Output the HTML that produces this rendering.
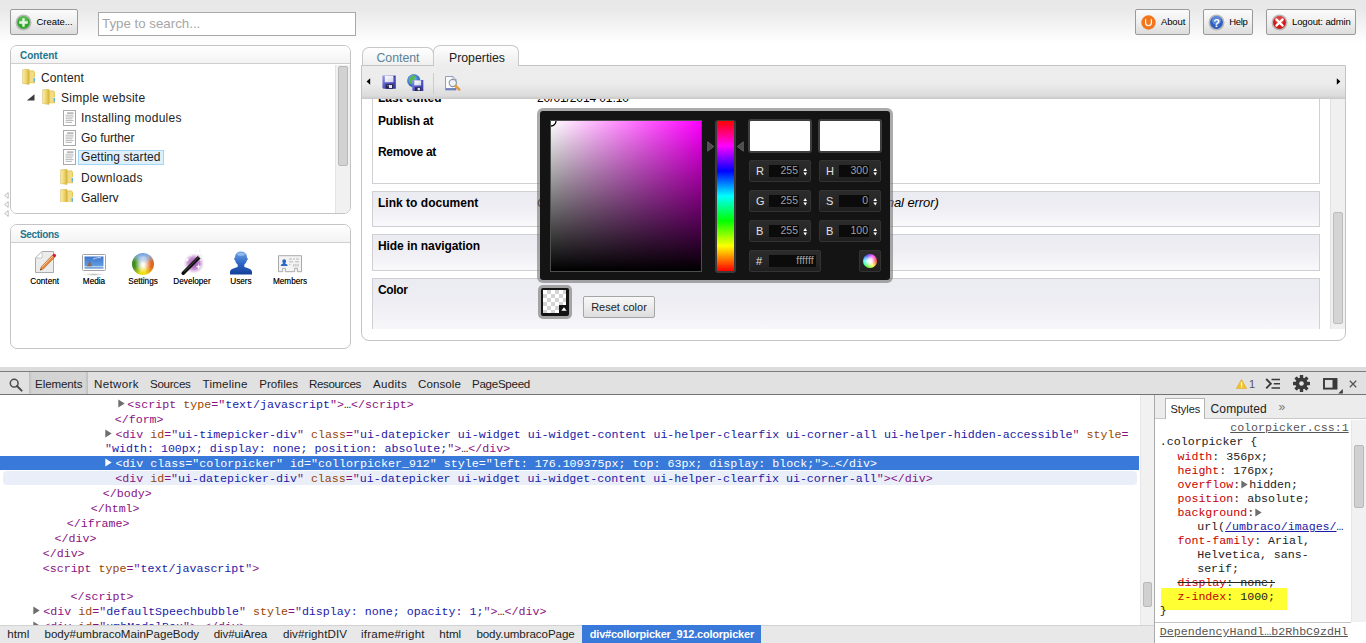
<!DOCTYPE html>
<html>
<head>
<meta charset="utf-8">
<title>Umbraco</title>
<style>
*{box-sizing:border-box;margin:0;padding:0}
html,body{width:1366px;height:643px;overflow:hidden;background:#fff}
body{position:relative;font-family:"Liberation Sans",sans-serif;font-size:12px;color:#222}
.abs{position:absolute}
#topgrad{left:0;top:0;width:1366px;height:43px;background:linear-gradient(#e8e8e8 0,#e9e9e9 22%,#f4f4f4 62%,#fff 100%)}
.btn{position:absolute;height:26px;border:1px solid #9a9a9a;border-radius:2px;background:linear-gradient(#fbfbfb,#efefef 50%,#dcdcdc);font-size:9.5px;color:#000;line-height:24px;white-space:nowrap}
.btn span{position:absolute;top:0}
#search{left:98px;top:12px;width:258px;height:24px;border:1px solid #a8a8a8;background:#fff;font-size:13.3px;color:#a6a6a6;line-height:22px;padding-left:3px}
.panel{position:absolute;border:1px solid #c4c4c4;border-radius:7px;background:#fff;overflow:hidden}
.phead{position:absolute;left:0;top:0;right:0;height:18px;border-bottom:1px solid #cfcfcf;background:linear-gradient(#fff,#f3f3f3);font-size:10px;font-weight:bold;color:#22758f;line-height:19px;padding-left:9px}
.tree{position:absolute;font-size:12px;color:#222;line-height:16px;white-space:nowrap;}
.tab{position:absolute;border:1px solid #c8c8c8;border-bottom:none;border-radius:7px 7px 0 0;font-size:13px;text-align:center}
.seclbl{position:absolute;top:51px;width:60px;text-align:center;font-size:8.2px;color:#000;line-height:11px;text-shadow:0 0 .3px rgba(0,0,0,.5)}
.pane{position:absolute;left:10px;width:948px;border:1px solid #d0d0d4;background:linear-gradient(#ebebf2,#ededf3 40%,#f9f9fb)}
.plabel{position:absolute;left:16px;font-size:12px;font-weight:bold;line-height:16px;color:#000;white-space:nowrap}
.cpf{position:absolute;height:22px;border:1px solid #333;border-radius:2px;background:linear-gradient(#2b2b2b,#272727 50%,#1f1f1f);}
.cpl{position:absolute;left:6px;top:0;line-height:21px;font-size:11px;color:#e2e2e2}
.cpi{position:absolute;top:4px;height:12px;background:#0b0b0b;color:#a0a0a0;font-size:10.500px;line-height:11px;text-align:right;padding-right:1px}
/* devtools */
#dt{left:0;top:368px;width:1366px;height:275px;background:#fff}
.mono{font-family:"Liberation Mono",monospace;font-size:11px;white-space:pre}
.ln{position:absolute;height:15px;line-height:15px;font-family:"Liberation Mono",monospace;font-size:11.65px;white-space:pre;color:#222}
.t{color:#881280}.a{color:#994500}.v{color:#1a1aa6}
.sel,.sel .t,.sel .a,.sel .v{color:#fff}
.dtab{position:absolute;top:8px;font-size:11.6px;color:#222;line-height:16px}
.bc{position:absolute;top:0;height:18px;line-height:18px;font-size:11.6px;color:#222;white-space:nowrap}
.sl{position:absolute;height:14px;line-height:14px;font-family:"Liberation Mono",monospace;font-size:11.62px;white-space:pre;color:#222}
.p{color:#c80000}
</style>
</head>
<body>
<div class="abs" id="topgrad"></div>

<!-- Create button -->
<div class="btn" style="left:10px;top:9px;width:68px">
  <svg class="abs" style="left:3.5px;top:3.5px" width="17" height="17" viewBox="0 0 17 17"><circle cx="8.5" cy="8.5" r="8" fill="#b9b9b9"/><circle cx="8.5" cy="8.5" r="6.3" fill="#2fa52c"/><circle cx="8.5" cy="6.5" r="4.6" fill="#5cc455" opacity=".7"/><path d="M7.3 4.2h2.4v3.1h3.1v2.4H9.7v3.1H7.3V9.7H4.2V7.3h3.1z" fill="#e9f3e6"/></svg>
  <span style="letter-spacing:-0.05px;left:25.5px">Create...</span>
</div>
<div class="abs" id="search">Type to search...</div>

<!-- right buttons -->
<div class="btn" style="left:1135px;top:9px;width:55px">
  <svg class="abs" style="left:5px;top:5px" width="15" height="15" viewBox="0 0 15 15"><circle cx="7.5" cy="7.5" r="7.2" fill="#f1761d"/><path d="M4.6 4.3v3.4a2.9 2.9 0 0 0 5.8 0V4.3" fill="none" stroke="#fff" stroke-width="1.2"/></svg>
  <span style="letter-spacing:-0.13px;left:25px">About</span>
</div>
<div class="btn" style="left:1203px;top:9px;width:50px">
  <svg class="abs" style="left:4px;top:4px" width="17" height="17" viewBox="0 0 17 17"><circle cx="8.5" cy="8.5" r="8" fill="#b9b9b9"/><circle cx="8.5" cy="8.5" r="6.4" fill="#2f5fc0"/><circle cx="8.5" cy="6.3" r="4.6" fill="#6d97e6" opacity=".7"/><text x="8.5" y="12.6" font-family="Liberation Sans" font-weight="bold" font-size="11" fill="#fff" text-anchor="middle">?</text></svg>
  <span style="letter-spacing:-0.34px;left:25.3px">Help</span>
</div>
<div class="btn" style="left:1266px;top:9px;width:90px">
  <svg class="abs" style="left:4px;top:4px" width="17" height="17" viewBox="0 0 17 17"><circle cx="8.5" cy="8.5" r="8" fill="#b9b9b9"/><circle cx="8.5" cy="8.5" r="6.4" fill="#d01818"/><circle cx="8.5" cy="6.3" r="4.6" fill="#ee5a5a" opacity=".6"/><path d="M5.4 5.4l6.2 6.2M11.6 5.4l-6.2 6.2" stroke="#fff" stroke-width="2.2" stroke-linecap="round"/></svg>
  <span style="letter-spacing:-0.12px;left:25px">Logout: admin</span>
</div>

<!-- splitter arrows -->
<svg class="abs" style="left:3.500px;top:192.0px" width="5" height="7" viewBox="0 0 5 7"><path d="M4.200 .6v5.800L.7 3.500z" fill="#fff" stroke="#ababab" stroke-width=".8"/></svg><svg class="abs" style="left:3.500px;top:201.0px" width="5" height="7" viewBox="0 0 5 7"><path d="M4.200 .6v5.800L.7 3.500z" fill="#fff" stroke="#ababab" stroke-width=".8"/></svg><svg class="abs" style="left:3.500px;top:210.0px" width="5" height="7" viewBox="0 0 5 7"><path d="M4.200 .6v5.800L.7 3.500z" fill="#fff" stroke="#ababab" stroke-width=".8"/></svg>
<!-- LEFT: content panel -->
<div class="panel" id="pcontent" style="left:10px;top:45px;width:341px;height:169px">
  <div class="phead"><span style="letter-spacing:-0.03px;">Content</span></div>
<svg class="abs" style="left:11px;top:23px" width="14" height="16" viewBox="0 0 14 16"><defs><linearGradient id="fg1" x1="0" x2="1"><stop offset="0" stop-color="#f9efb4"/><stop offset=".55" stop-color="#ecd46c"/><stop offset="1" stop-color="#d9b53e"/></linearGradient></defs><path d="M7 1.6h5.2v1.2H13v11.4H7z" fill="#e3c558"/><path d="M7.6 2.6h4.6v10.8H7.6z" fill="#f1dc83"/><path d="M.6 .8L7 .3v15.2L.6 14.4z" fill="url(#fg1)"/><path d="M.6 .8L7 .3v15.2L.6 14.4z" fill="none" stroke="#d2b04a" stroke-width=".5"/><rect x="11.6" y="8.6" width="1.3" height="4.2" fill="#59b1e6"/><rect x="11.6" y="8" width="1.3" height="1" fill="#e9f5fb"/></svg>
<div class="tree" style="letter-spacing:0.14px;left:30px;top:24px">Content</div>
<svg class="abs" style="left:15px;top:48px" width="9" height="7" viewBox="0 0 9 7"><path d="M8.500 .3v6.200H.8z" fill="#3c3c3c"/></svg>
<svg class="abs" style="left:31px;top:43px" width="14" height="16" viewBox="0 0 14 16"><defs><linearGradient id="fg2" x1="0" x2="1"><stop offset="0" stop-color="#f9efb4"/><stop offset=".55" stop-color="#ecd46c"/><stop offset="1" stop-color="#d9b53e"/></linearGradient></defs><path d="M7 1.6h5.2v1.2H13v11.4H7z" fill="#e3c558"/><path d="M7.6 2.6h4.6v10.8H7.6z" fill="#f1dc83"/><path d="M.6 .8L7 .3v15.2L.6 14.4z" fill="url(#fg2)"/><path d="M.6 .8L7 .3v15.2L.6 14.4z" fill="none" stroke="#d2b04a" stroke-width=".5"/><rect x="11.6" y="8.6" width="1.3" height="4.2" fill="#59b1e6"/><rect x="11.6" y="8" width="1.3" height="1" fill="#e9f5fb"/></svg>
<div class="tree" style="letter-spacing:0.26px;left:50px;top:44px">Simple website</div>
<svg class="abs" style="left:52px;top:64px" width="13" height="16" viewBox="0 0 13 16"><rect x=".5" y=".5" width="12" height="15" fill="#fff" stroke="#a9a9a9"/><g fill="#b9b9b9"><rect x="4" y="2.5" width="6.5" height="1.2" fill="#9a9a9a"/><rect x="2.5" y="4.7" width="8" height="1"/><rect x="2.5" y="6.5" width="8" height="1"/><rect x="2.5" y="8.3" width="7" height="1"/><rect x="2.5" y="10.1" width="8" height="1"/><rect x="2.5" y="11.9" width="6.5" height="1"/></g></svg>
<div class="tree" style="letter-spacing:0.26px;left:70px;top:64px">Installing modules</div>
<svg class="abs" style="left:52px;top:84px" width="13" height="16" viewBox="0 0 13 16"><rect x=".5" y=".5" width="12" height="15" fill="#fff" stroke="#a9a9a9"/><g fill="#b9b9b9"><rect x="4" y="2.5" width="6.5" height="1.2" fill="#9a9a9a"/><rect x="2.5" y="4.7" width="8" height="1"/><rect x="2.5" y="6.5" width="8" height="1"/><rect x="2.5" y="8.3" width="7" height="1"/><rect x="2.5" y="10.1" width="8" height="1"/><rect x="2.5" y="11.9" width="6.5" height="1"/></g></svg>
<div class="tree" style="letter-spacing:-0.07px;left:70px;top:84px">Go further</div>
<svg class="abs" style="left:52px;top:103px" width="13" height="16" viewBox="0 0 13 16"><rect x=".5" y=".5" width="12" height="15" fill="#fff" stroke="#a9a9a9"/><g fill="#b9b9b9"><rect x="4" y="2.5" width="6.5" height="1.2" fill="#9a9a9a"/><rect x="2.5" y="4.7" width="8" height="1"/><rect x="2.5" y="6.5" width="8" height="1"/><rect x="2.5" y="8.3" width="7" height="1"/><rect x="2.5" y="10.1" width="8" height="1"/><rect x="2.5" y="11.9" width="6.5" height="1"/></g></svg>
<div class="abs" style="left:67px;top:104px;width:86px;height:15px;background:#dff0fb;border:1px solid #a4d5f4"></div>
<div class="tree" style="letter-spacing:0.05px;left:70px;top:103px">Getting started</div>
<svg class="abs" style="left:49px;top:123px" width="14" height="16" viewBox="0 0 14 16"><defs><linearGradient id="fg3" x1="0" x2="1"><stop offset="0" stop-color="#f9efb4"/><stop offset=".55" stop-color="#ecd46c"/><stop offset="1" stop-color="#d9b53e"/></linearGradient></defs><path d="M7 1.6h5.2v1.2H13v11.4H7z" fill="#e3c558"/><path d="M7.6 2.6h4.6v10.8H7.6z" fill="#f1dc83"/><path d="M.6 .8L7 .3v15.2L.6 14.4z" fill="url(#fg3)"/><path d="M.6 .8L7 .3v15.2L.6 14.4z" fill="none" stroke="#d2b04a" stroke-width=".5"/><rect x="11.6" y="8.6" width="1.3" height="4.2" fill="#59b1e6"/><rect x="11.6" y="8" width="1.3" height="1" fill="#e9f5fb"/></svg>
<div class="tree" style="letter-spacing:0.27px;left:70px;top:124px">Downloads</div>
<svg class="abs" style="left:49px;top:143px" width="14" height="16" viewBox="0 0 14 16"><defs><linearGradient id="fg4" x1="0" x2="1"><stop offset="0" stop-color="#f9efb4"/><stop offset=".55" stop-color="#ecd46c"/><stop offset="1" stop-color="#d9b53e"/></linearGradient></defs><path d="M7 1.6h5.2v1.2H13v11.4H7z" fill="#e3c558"/><path d="M7.6 2.6h4.6v10.8H7.6z" fill="#f1dc83"/><path d="M.6 .8L7 .3v15.2L.6 14.4z" fill="url(#fg4)"/><path d="M.6 .8L7 .3v15.2L.6 14.4z" fill="none" stroke="#d2b04a" stroke-width=".5"/><rect x="11.6" y="8.6" width="1.3" height="4.2" fill="#59b1e6"/><rect x="11.6" y="8" width="1.3" height="1" fill="#e9f5fb"/></svg>
<div class="tree" style="letter-spacing:-0.07px;left:70px;top:144px;height:12px;overflow:hidden">Gallery</div>
<div class="abs" style="left:324px;top:19px;width:16px;height:149px;background:#f1f1f1;border-left:1px solid #e4e4e4"></div>
<div class="abs" style="left:327px;top:20px;width:10px;height:100px;background:#d2d2d2;border:1px solid #b8b8b8;border-radius:2px"></div>
<div class="abs" style="left:0;top:156px;width:324px;height:14px;background:#fff"></div>
</div>
<!-- LEFT: sections panel -->
<div class="panel" id="psections" style="left:10px;top:224px;width:341px;height:125px">
  <div class="phead"><span style="letter-spacing:-0.34px;">Sections</span></div>
<div class="seclbl" style="left:3.7px">Content</div>
<div class="seclbl" style="left:53.0px">Media</div>
<div class="seclbl" style="left:102.0px">Settings</div>
<div class="seclbl" style="left:151.0px">Developer</div>
<div class="seclbl" style="left:200.0px">Users</div>
<div class="seclbl" style="left:249.0px">Members</div>
<svg class="abs" style="left:24px;top:26px" width="22" height="23" viewBox="0 0 22 23"><path d="M7 .5h11.5v21H.5V7z" fill="#ececec" stroke="#aaa"/><path d="M7 .5V7H.5z" fill="#fff" stroke="#bbb" stroke-width=".8"/><path d="M17.2 4.3l2.3 2.2L8.3 18 5.2 19.3l1-3.3z" fill="#e08a3c" stroke="#b9672a" stroke-width=".6"/><path d="M17.2 4.3l1.2-1.2c.5-.5 1.200-.5 1.700 0l.7.7c.5.5.5 1.200 0 1.700l-1.300 1.000z" fill="#d02038"/><path d="M5.200 19.300l.5-1.600 1.200 1.100z" fill="#333"/><path d="M7.3 15.800L17.800 5" stroke="#f6c79a" stroke-width=".9"/></svg>
<svg class="abs" style="left:70px;top:28px" width="26" height="24" viewBox="0 0 26 24"><defs><linearGradient id="mg" x1="0" x2="0" y1="0" y2="1"><stop offset="0" stop-color="#3e74cc"/><stop offset=".75" stop-color="#5e9be0"/><stop offset=".8" stop-color="#cfe6f2"/><stop offset="1" stop-color="#3b78c8"/></linearGradient><radialGradient id="ms"><stop offset="0" stop-color="#999" stop-opacity=".6"/><stop offset="1" stop-color="#999" stop-opacity="0"/></radialGradient></defs><ellipse cx="13" cy="21.500" rx="11" ry="1.500" fill="url(#ms)"/><rect x="1.500" y="1.500" width="23" height="16" rx="1" fill="#fff" stroke="#a3a3a3"/><rect x="3.500" y="3.500" width="19" height="12" fill="url(#mg)"/><path d="M6 13.200l2.600-5.500 2.600 5.500z" fill="#8a6a58"/><path d="M12 6.200c3-1.500 5.500-1.700 8-1.500" stroke="#c9dcf2" stroke-width=".9" fill="none"/></svg>
<div class="abs" style="left:123px;top:52px;width:18px;height:4px;border-radius:50%;background:radial-gradient(ellipse,rgba(120,120,120,.55),rgba(120,120,120,0) 70%)"></div><div class="abs" style="left:121px;top:28px;width:22px;height:22px;border-radius:50%;background:radial-gradient(ellipse 60% 28% at 50% 20%,rgba(255,255,255,.6),rgba(255,255,255,0) 100%),radial-gradient(circle at 50% 52%,#fff 0,rgba(255,255,255,.9) 12%,rgba(255,255,255,0) 52%),conic-gradient(from 0deg,#3f7fd0 0deg,#4a82cc 25deg,#e0661c 80deg,#e2681c 110deg,#f0e018 165deg,#ecdf1a 195deg,#3f8e22 250deg,#3f8e22 290deg,#3f7fd0 335deg,#3f7fd0 360deg)"></div>
<svg class="abs" style="left:169px;top:25px" width="26" height="26" viewBox="0 0 26 26"><defs><radialGradient id="dg"><stop offset="0" stop-color="#a04cb0"/><stop offset=".55" stop-color="#b978c6" stop-opacity=".85"/><stop offset="1" stop-color="#d9b8e0" stop-opacity="0"/></radialGradient></defs><circle cx="14" cy="13.400" r="10.500" fill="url(#dg)"/><g fill="#fff"><path d="M7 7.500l.6 1.700 1.700.6-1.700.6L7 12.100l-.6-1.700-1.700-.6 1.700-.6z"/><path d="M18.500 14l.7 2 2 .7-2 .7-.7 2-.7-2-2-.7 2-.7z"/><circle cx="11" cy="5.500" r=".7"/><circle cx="20.500" cy="10" r=".6"/></g><path d="M3.200 23.200L19.600 6.800" stroke="#111" stroke-width="3.600" stroke-linecap="round"/><path d="M19.200 7.200l2.700-2.700" stroke="#f4f4f4" stroke-width="3.600" stroke-linecap="butt"/><path d="M4 21.700L19 6.700" stroke="#555" stroke-width=".8"/><path d="M15 1h1.500M19 .8h1.500" stroke="#bfe0f5" stroke-width=".8"/></svg>
<svg class="abs" style="left:218px;top:26px" width="24" height="24" viewBox="0 0 24 24"><defs><linearGradient id="ug" x1="0" x2="0" y1="0" y2="1"><stop offset="0" stop-color="#6ea3e6"/><stop offset=".5" stop-color="#2f68c6"/><stop offset="1" stop-color="#123f9a"/></linearGradient></defs><path d="M12 .6c3.600 0 6 2.400 6 5.800 0 .5 1 .7.900 1.600-.1 1-.9 1-1.100 1.700-.5 1.800-1.500 3-2.500 3.900v2.200c1.200 1.300 7.700 1.600 7.700 5.200v2.400H1v-2.400c0-3.600 6.500-3.900 7.700-5.200v-2.200c-1-.9-2-2.100-2.500-3.900-.2-.7-1-.7-1.100-1.700C5 7.100 6 6.900 6 6.400 6 3 8.400.6 12 .6z" fill="url(#ug)"/><ellipse cx="12" cy="3.300" rx="3.800" ry="1.500" fill="#a9c9f3" opacity=".7"/></svg>
<svg class="abs" style="left:266px;top:30px" width="26" height="18" viewBox="0 0 26 18"><path d="M1.500 .7h23v16H20.300v-3.400h-2.600v3.400H8.300v-3.400H5.700v3.400H1.500z" fill="#f3f3f3" stroke="#a9a9a9"/><path d="M7.200 4.300c1.200 0 1.900.9 1.900 2 0 .9-.5 1.500-.9 1.900.2.700 2.400.8 2.400 2.300v.6H3.800v-.6c0-1.500 2.200-1.600 2.400-2.300-.4-.4-.9-1-.9-1.900 0-1.100.7-2 1.900-2z" fill="#2d66c4"/><g fill="#c4c4c4"><rect x="12" y="3.500" width="3" height="1.200"/><rect x="16" y="3.500" width="2" height="1.200"/><rect x="19" y="3.500" width="3" height="1.200"/><rect x="12" y="6.200" width="4" height="1.200"/><rect x="18" y="6.200" width="4" height="1.200"/><rect x="12" y="9" width="1.500" height="1"/><rect x="16" y="9" width="1.300" height="2.600"/><rect x="18.200" y="9" width="1.300" height="2.600"/><rect x="20.400" y="9" width="1.300" height="2.600"/></g></svg>
</div>

<!-- RIGHT editor -->

<!-- tabs -->
<div class="tab" style="left:362px;top:47px;width:72px;height:18px;background:linear-gradient(#fff,#f0f0f0);color:#5a8297;line-height:20px;z-index:2;font-size:12.3px">Content</div>
<div class="tab" style="left:433px;top:45px;width:86px;height:21px;background:linear-gradient(#fff,#f1f1f1 70%,#ededed);color:#222;line-height:24px;z-index:3;font-size:12.3px;padding-left:2px">Properties</div>
<div class="abs" id="editor" style="left:361px;top:65px;width:985px;height:276px;border:1px solid #c4c4c4;border-radius:0 0 8px 8px;background:#fff;overflow:hidden">
  <div class="abs" id="tbar" style="left:0;top:0;width:983px;height:33px;background:linear-gradient(#ededed 0,#ececec 55%,#dcdcdc 92%,#cfcfcf 100%);border-bottom:1px solid #cacaca"></div>
  <!-- toolbar icons -->
  <svg class="abs" style="left:4px;top:12px" width="5" height="7" viewBox="0 0 5 7"><path d="M4.200 .3v6.400L.6 3.500z" fill="#000"/></svg>
  <svg class="abs" style="left:20px;top:9px" width="15" height="15" viewBox="0 0 15 15"><defs><linearGradient id="sv" x1="0" x2="1" y1="0" y2="1"><stop offset="0" stop-color="#9a9cec"/><stop offset=".45" stop-color="#5a5cc8"/><stop offset="1" stop-color="#2e2f96"/></linearGradient><linearGradient id="sw" x1="0" x2="1" y1="0" y2="1"><stop offset="0" stop-color="#ffffff"/><stop offset="1" stop-color="#cfd3ea"/></linearGradient></defs><path d="M.4 .4h13.400v13.400H1.400l-1-1z" fill="url(#sv)"/><rect x="2.800" y=".8" width="8.600" height="6.400" fill="url(#sw)"/><rect x="11.900" y="1.200" width="1" height="1" fill="#23256f"/><rect x="3.600" y="9.200" width="7.400" height="4.600" fill="#26264f"/><rect x="7" y="10" width="3" height="3" fill="#e9e9f1"/><path d="M4.600 10.200h2v1.500z" fill="#8d8fb0"/></svg>
  <svg class="abs" style="left:45px;top:8px" width="17" height="18" viewBox="0 0 17 18"><defs><radialGradient id="gl" cx=".4" cy=".35" r=".65"><stop offset="0" stop-color="#9fd0f7"/><stop offset=".6" stop-color="#3f86d6"/><stop offset="1" stop-color="#2159a8"/></radialGradient></defs><circle cx="6.800" cy="6.800" r="6.300" fill="url(#gl)" stroke="#3a6eb5" stroke-width=".6"/><path d="M3.500 3.200c1.500-1.500 3.500-2 5-1.500 1 .8-.2 1.800-1 2.200-.5 1 .5 1.500 0 2.500s-2 .5-2.500 2-.5 2-1.500 1.500S2 7 2.200 5.500z" fill="#57b947"/><path d="M5.300 6h11v11H6.100l-.8-.8z" fill="url(#sv)"/><rect x="7.300" y="6.400" width="6.800" height="5" fill="url(#sw)"/><rect x="7.900" y="13.200" width="5.800" height="3.800" fill="#26264f"/><rect x="10.600" y="13.900" width="2.300" height="2.400" fill="#e9e9f1"/></svg>
  <div class="abs" style="left:71px;top:7px;width:1px;height:21px;background:#c9c9ee"></div>
  <svg class="abs" style="left:83px;top:10px" width="17" height="16" viewBox="0 0 17 16"><path d="M.5 .5h7.500l3 3v10.500H.5z" fill="#fbfbfd" stroke="#8a93b8" stroke-width=".9"/><path d="M8 .5v3h3" fill="#dfe3f2" stroke="#8a93b8" stroke-width=".7"/><path d="M1 13h10" stroke="#4d66b5" stroke-width="1.600"/><circle cx="7.800" cy="7" r="3.600" fill="#e9f1fa" fill-opacity=".85" stroke="#8f979f" stroke-width="1.100"/><path d="M10.500 9.800l3.800 3.900" stroke="#e39a3c" stroke-width="2.400" stroke-linecap="round"/></svg>
  <svg class="abs" style="left:974px;top:12px" width="5" height="7" viewBox="0 0 5 7"><path d="M.8 .3v6.400l3.600-3.200z" fill="#000"/></svg>

  <!-- scroll area -->
  <div class="abs" id="scroll" style="left:0;top:33px;width:983px;height:230px;overflow:hidden;background:#fff">
    <!-- inner scrollbar -->
    <div class="abs" style="left:968px;top:0;width:15px;height:230px;background:#f0f0f0;border-left:1px solid #e2e2e2"></div>
    <div class="abs" style="left:971px;top:113px;width:10px;height:112px;background:#d4d4d4;border:1px solid #bdbdbd;border-radius:2px"></div>
    <!-- pane 1 -->
    <div class="pane" style="top:-40px;height:125px;background:#fff"></div>
    <div class="plabel" style="letter-spacing:0.02px;top:-9px">Last edited</div>
    <div class="abs" style="letter-spacing:-0.10px;left:175px;top:-9px;font-size:12px;line-height:16px;color:#000">20/01/2014 01:10</div>
    <div class="plabel" style="letter-spacing:-0.21px;top:14px">Publish at</div>
    <div class="plabel" style="letter-spacing:-0.30px;top:45px">Remove at</div>
    <!-- pane 2 -->
    <div class="pane" style="top:92px;height:36px"></div>
    <div class="plabel" style="letter-spacing:0.02px;top:96px">Link to document</div>
    <div class="abs" style="letter-spacing:-0.08px;left:175px;top:96px;font-size:13px;line-height:16px;font-style:italic;color:#000;white-space:nowrap">Oops: this document is published but is not in the cache (internal error)</div>
    <!-- pane 3 -->
    <div class="pane" style="top:135px;height:37px"></div>
    <div class="plabel" style="letter-spacing:-0.07px;top:139px">Hide in navigation</div>
    <!-- pane 4 -->
    <div class="pane" style="top:179px;height:56px"></div>
    <div class="plabel" style="letter-spacing:-0.33px;top:183px">Color</div>
    <!-- swatch button -->
    <div class="abs" style="left:176px;top:186px;width:34px;height:34px;background:#a3a3a3;border-radius:5px"></div>
    <div class="abs" style="left:179px;top:189px;width:28px;height:28px;background:#141414;border-radius:2px"></div>
    <div class="abs" style="left:181px;top:191px;width:23px;height:23px;background-color:#fff;background-image:linear-gradient(45deg,#d4d4d4 25%,transparent 25%,transparent 75%,#d4d4d4 75%),linear-gradient(45deg,#d4d4d4 25%,transparent 25%,transparent 75%,#d4d4d4 75%);background-size:8px 8px;background-position:0 0,4px 4px"></div>
    <div class="abs" style="left:197px;top:206px;width:8px;height:9px;background:#141414"></div>
    <svg class="abs" style="left:198.500px;top:208px" width="6" height="4" viewBox="0 0 6 4"><path d="M3 .3L5.700 3.700H.3z" fill="#fff"/></svg>
    <!-- reset -->
    <div class="abs" style="left:221px;top:197px;width:72px;height:22px;border:1px solid #a5a5a5;border-radius:2px;background:linear-gradient(#f8f8f8,#ececec 50%,#dddddd);font-size:11px;line-height:20px;text-align:center;color:#222">Reset color</div>
  </div>
</div>


<!-- COLOR PICKER -->
<div class="abs" id="cp" style="left:537px;top:108px;width:356px;height:175px;border-radius:6px;background:rgba(120,120,120,.62);z-index:10"></div>
<div class="abs" style="left:540px;top:111px;width:350px;height:169px;border-radius:3px;background:#141414;z-index:11">
  <!-- sat/val square : abs 550..702 , 120..272 -->
  <div class="abs" style="left:10px;top:9px;width:152px;height:152px;border:1px solid #4e4e4e;background:linear-gradient(to top,#000,rgba(0,0,0,0)),linear-gradient(to right,#fff,#f0f)"></div>
  <svg class="abs" style="left:11px;top:10px" width="8" height="8" viewBox="0 0 8 8"><circle cx="0" cy="0" r="5" fill="#fff" stroke="#000" stroke-width="1.300"/></svg>
  <!-- hue -->
  <div class="abs" style="left:175px;top:9px;width:21px;height:153px;border-radius:3px;background:#3b3b3b"></div>
  <div class="abs" style="left:177px;top:10px;width:17px;height:150px;background:linear-gradient(#f00 0,#f0f 16.600%,#00f 33.300%,#0ff 50%,#0f0 66.600%,#ff0 83.300%,#f00 100%)"></div>
  <svg class="abs" style="left:167px;top:30px" width="8" height="11" viewBox="0 0 8 11"><path d="M.700 .8L6.800 5.500.700 10.200z" fill="#4c4c4c" stroke="#6a6a6a" stroke-width=".8"/></svg>
  <svg class="abs" style="left:196px;top:30px" width="8" height="11" viewBox="0 0 8 11"><path d="M7.300 .8L1.200 5.500 7.300 10.200z" fill="#4c4c4c" stroke="#6a6a6a" stroke-width=".8"/></svg>
  <!-- swatches -->
  <div class="abs" style="left:208px;top:8px;width:64px;height:34px;border:2px solid #3f3f3f;border-radius:3px;background:#fff"></div>
  <div class="abs" style="left:278px;top:8px;width:64px;height:34px;border:2px solid #3f3f3f;border-radius:3px;background:#fff"></div>
  <div class="cpf" style="left:209px;top:49px;width:62px"><span class="cpl">R</span><span class="cpi" style="left:19px;width:30px">255</span><svg class="abs" style="left:52.500px;top:7px" width="4.500" height="7.500" viewBox="0 0 5 7" preserveAspectRatio="none"><path d="M2.500 .1L4.600 2.900H.4zM2.500 6.900L4.600 4.100H.4z" fill="#fff"/></svg></div>
  <div class="cpf" style="left:279px;top:49px;width:62px"><span class="cpl">H</span><span class="cpi" style="left:19px;width:30px">300</span><svg class="abs" style="left:52.500px;top:7px" width="4.500" height="7.500" viewBox="0 0 5 7" preserveAspectRatio="none"><path d="M2.500 .1L4.600 2.900H.4zM2.500 6.900L4.600 4.100H.4z" fill="#fff"/></svg></div>
  <div class="cpf" style="left:209px;top:79px;width:62px"><span class="cpl">G</span><span class="cpi" style="left:19px;width:30px">255</span><svg class="abs" style="left:52.500px;top:7px" width="4.500" height="7.500" viewBox="0 0 5 7" preserveAspectRatio="none"><path d="M2.500 .1L4.600 2.900H.4zM2.500 6.900L4.600 4.100H.4z" fill="#fff"/></svg></div>
  <div class="cpf" style="left:279px;top:79px;width:62px"><span class="cpl">S</span><span class="cpi" style="left:19px;width:30px">0</span><svg class="abs" style="left:52.500px;top:7px" width="4.500" height="7.500" viewBox="0 0 5 7" preserveAspectRatio="none"><path d="M2.500 .1L4.600 2.900H.4zM2.500 6.900L4.600 4.100H.4z" fill="#fff"/></svg></div>
  <div class="cpf" style="left:209px;top:109px;width:62px"><span class="cpl">B</span><span class="cpi" style="left:19px;width:30px">255</span><svg class="abs" style="left:52.500px;top:7px" width="4.500" height="7.500" viewBox="0 0 5 7" preserveAspectRatio="none"><path d="M2.500 .1L4.600 2.900H.4zM2.500 6.900L4.600 4.100H.4z" fill="#fff"/></svg></div>
  <div class="cpf" style="left:279px;top:109px;width:62px"><span class="cpl">B</span><span class="cpi" style="left:19px;width:30px">100</span><svg class="abs" style="left:52.500px;top:7px" width="4.500" height="7.500" viewBox="0 0 5 7" preserveAspectRatio="none"><path d="M2.500 .1L4.600 2.900H.4zM2.500 6.900L4.600 4.100H.4z" fill="#fff"/></svg></div>
  <div class="cpf" style="left:209px;top:139px;width:72px"><span class="cpl">#</span><span class="cpi" style="left:19px;width:47px;letter-spacing:.2px;padding-right:2px">ffffff</span></div>
  <div class="cpf" style="left:319px;top:139px;width:22px"></div>
  <div class="abs" style="left:323px;top:143px;width:14px;height:14px;border-radius:50%;background:radial-gradient(circle,#fff 0,rgba(255,255,255,.9) 22%,rgba(255,255,255,.35) 60%,rgba(255,255,255,.15) 100%),conic-gradient(from 90deg,#f00,#ff0,#0f0,#0ff,#00f,#f0f,#f00)"></div>
</div>

<!-- DEVTOOLS -->

<div class="abs" id="dt" style="left:0;top:367px;width:1366px;height:276px;background:#fff;overflow:hidden;z-index:20">
  <div class="abs" style="left:0;top:0;width:1366px;height:4px;background:#dcdcdc"></div>
  <div class="abs" style="left:0;top:4px;width:1366px;height:24px;background:#e1e1e1;border-top:1px solid #7d7d7d;border-bottom:1px solid #737373"></div>
</div>
<div class="abs" id="dtc" style="left:0;top:368px;width:1366px;height:275px;z-index:21;overflow:hidden">
<div class="abs" style="left:0;top:88px;width:1139px;height:14px;background:#3879d9"></div>
<div class="abs" style="left:3px;top:103px;width:1134px;height:14px;background:#e9eef9;border-radius:4px"></div>
<svg class="abs" style="left:118px;top:31px" width="7" height="9" viewBox="0 0 7 9"><path d="M.300 .5v8L6.700 4.500z" fill="#6e6e6e"/></svg>
<div class="ln " style="left:127.3px;top:29px"><span class="t">&lt;script</span> <span class="a">type</span><span class="t">="</span><span class="v">text/javascript</span><span class="t">"</span><span class="t">&gt;</span>…<span class="t">&lt;/script&gt;</span></div>
<div class="ln " style="left:114.7px;top:44px"><span class="t">&lt;/form&gt;</span></div>
<svg class="abs" style="left:105px;top:61px" width="7" height="9" viewBox="0 0 7 9"><path d="M.300 .5v8L6.700 4.500z" fill="#6e6e6e"/></svg>
<div class="ln " style="left:115.4px;top:59px"><span class="t">&lt;div</span> <span class="a">id</span><span class="t">="</span><span class="v">ui-timepicker-div</span><span class="t">"</span> <span class="a">class</span><span class="t">="</span><span class="v">ui-datepicker ui-widget ui-widget-content ui-helper-clearfix ui-corner-all ui-helper-hidden-accessible</span><span class="t">"</span> <span class="a">style</span><span class="t">=</span></div>
<div class="ln " style="left:105.0px;top:73px"><span class="t">"</span><span class="v">width: 100px; display: none; position: absolute;</span><span class="t">"</span><span class="t">&gt;</span>…<span class="t">&lt;/div&gt;</span></div>
<svg class="abs" style="left:105px;top:90px" width="7" height="9" viewBox="0 0 7 9"><path d="M.300 .5v8L6.700 4.500z" fill="#fff"/></svg>
<div class="ln sel" style="left:115.4px;top:88px"><span class="t">&lt;div</span> <span class="a">class</span><span class="t">="</span><span class="v">colorpicker</span><span class="t">"</span> <span class="a">id</span><span class="t">="</span><span class="v">collorpicker_912</span><span class="t">"</span> <span class="a">style</span><span class="t">="</span><span class="v">left: 176.109375px; top: 63px; display: block;</span><span class="t">"</span><span class="t">&gt;</span>…<span class="t">&lt;/div&gt;</span></div>
<div class="ln " style="left:115.2px;top:103px"><span class="t">&lt;div</span> <span class="a">id</span><span class="t">="</span><span class="v">ui-datepicker-div</span><span class="t">"</span> <span class="a">class</span><span class="t">="</span><span class="v">ui-datepicker ui-widget ui-widget-content ui-helper-clearfix ui-corner-all</span><span class="t">"</span><span class="t">&gt;&lt;/div&gt;</span></div>
<div class="ln " style="left:102.8px;top:118px"><span class="t">&lt;/body&gt;</span></div>
<div class="ln " style="left:90.7px;top:133px"><span class="t">&lt;/html&gt;</span></div>
<div class="ln " style="left:66.7px;top:148px"><span class="t">&lt;/iframe&gt;</span></div>
<div class="ln " style="left:54.6px;top:163px"><span class="t">&lt;/div&gt;</span></div>
<div class="ln " style="left:42.7px;top:178px"><span class="t">&lt;/div&gt;</span></div>
<div class="ln " style="left:42.7px;top:193px"><span class="t">&lt;script</span> <span class="a">type</span><span class="t">="</span><span class="v">text/javascript</span><span class="t">"</span><span class="t">&gt;</span></div>
<div class="ln " style="left:70.6px;top:221px"><span class="t">&lt;/script&gt;</span></div>
<svg class="abs" style="left:33px;top:238px" width="7" height="9" viewBox="0 0 7 9"><path d="M.300 .5v8L6.700 4.500z" fill="#6e6e6e"/></svg>
<div class="ln " style="left:43.3px;top:236px"><span class="t">&lt;div</span> <span class="a">id</span><span class="t">="</span><span class="v">defaultSpeechbubble</span><span class="t">"</span> <span class="a">style</span><span class="t">="</span><span class="v">display: none; opacity: 1;</span><span class="t">"</span><span class="t">&gt;</span>…<span class="t">&lt;/div&gt;</span></div>
<svg class="abs" style="left:33px;top:253px" width="7" height="9" viewBox="0 0 7 9"><path d="M.300 .5v8L6.700 4.500z" fill="#6e6e6e"/></svg>
<div class="ln " style="left:43.3px;top:251px"><span class="t">&lt;div</span> <span class="a">id</span><span class="t">="</span><span class="v">umbModalBox</span><span class="t">"</span><span class="t">&gt;</span>…<span class="t">&lt;/div&gt;</span></div>
<svg class="abs" style="left:9px;top:10px" width="14" height="14" viewBox="0 0 14 14"><circle cx="5.200" cy="5.200" r="3.900" fill="none" stroke="#4a4a4a" stroke-width="1.500"/><path d="M8 8l4.600 4.600" stroke="#4a4a4a" stroke-width="2" stroke-linecap="round"/></svg>
<div class="abs" style="left:29px;top:4px;width:59px;height:22px;background:linear-gradient(to right,#bdbdbd 0,#d2d2d2 5%,#d6d6d6 95%,#bdbdbd 100%)"></div>
<div class="dtab" style="letter-spacing:-0.13px;left:35.1px">Elements</div>
<div class="dtab" style="letter-spacing:0.35px;left:94.0px">Network</div>
<div class="dtab" style="letter-spacing:-0.28px;left:150.0px">Sources</div>
<div class="dtab" style="letter-spacing:0.23px;left:202.5px">Timeline</div>
<div class="dtab" style="letter-spacing:0.02px;left:259.2px">Profiles</div>
<div class="dtab" style="letter-spacing:-0.38px;left:309.0px">Resources</div>
<div class="dtab" style="letter-spacing:0.29px;left:373.0px">Audits</div>
<div class="dtab" style="letter-spacing:0.06px;left:418.0px">Console</div>
<div class="dtab" style="letter-spacing:-0.29px;left:472.0px">PageSpeed</div>
<svg class="abs" style="left:1236px;top:11px" width="11" height="10" viewBox="0 0 11 10"><path d="M5.500 .4L10.700 9.600H.3z" fill="#f2c12c" stroke="#d9a514" stroke-width=".5"/><rect x="4.900" y="3.200" width="1.300" height="3.500" fill="#fff"/><rect x="4.900" y="7.400" width="1.300" height="1.200" fill="#fff"/></svg>
<div class="abs" style="left:1249px;top:9px;font-size:11px;line-height:14px;color:#555">1</div>
<svg class="abs" style="left:1265px;top:10px" width="16" height="12" viewBox="0 0 16 12"><path d="M1.200 1l4.600 4.700L1.200 10.400" fill="none" stroke="#3a3a3a" stroke-width="1.900"/><path d="M6.500 1.500H15M8.800 5.700H15M6.500 9.900H15" stroke="#3a3a3a" stroke-width="1.500"/></svg>
<svg class="abs" style="left:1293px;top:7px" width="17" height="17" viewBox="0 0 17 17"><g fill="#3a3a3a"><rect x="6.800" y="0" width="3.400" height="4" rx=".6" transform="rotate(0 8.500 8.500)"/><rect x="6.800" y="0" width="3.400" height="4" rx=".6" transform="rotate(45 8.500 8.500)"/><rect x="6.800" y="0" width="3.400" height="4" rx=".6" transform="rotate(90 8.500 8.500)"/><rect x="6.800" y="0" width="3.400" height="4" rx=".6" transform="rotate(135 8.500 8.500)"/><rect x="6.800" y="0" width="3.400" height="4" rx=".6" transform="rotate(180 8.500 8.500)"/><rect x="6.800" y="0" width="3.400" height="4" rx=".6" transform="rotate(225 8.500 8.500)"/><rect x="6.800" y="0" width="3.400" height="4" rx=".6" transform="rotate(270 8.500 8.500)"/><rect x="6.800" y="0" width="3.400" height="4" rx=".6" transform="rotate(315 8.500 8.500)"/><circle cx="8.500" cy="8.500" r="6"/></g><circle cx="8.500" cy="8.500" r="2.300" fill="#e4e4e4"/></svg>
<svg class="abs" style="left:1323px;top:10px" width="21" height="16" viewBox="0 0 21 16"><rect x="1" y="1" width="12.500" height="9.600" fill="none" stroke="#3a3a3a" stroke-width="1.900"/><rect x="9.500" y="1" width="4" height="9.600" fill="#3a3a3a"/><path d="M19.800 11v4.600h-4.600z" fill="#3a3a3a"/></svg>
<svg class="abs" style="left:1349px;top:12px" width="8" height="8" viewBox="0 0 8 8"><path d="M.8 .8l6.400 6.400M7.200 .8L.8 7.200" stroke="#555" stroke-width="1.300"/></svg>
<div class="abs" style="left:1140px;top:27px;width:15px;height:230px;background:#f1f1f1;border-left:1px solid #e6e6e6"></div>
<div class="abs" style="left:1143px;top:214px;width:9px;height:25px;background:#d0d0d0;border:1px solid #b9b9b9;border-radius:2px"></div>
<div class="abs" style="left:1154px;top:27px;width:212px;height:248px;background:#fff;border-left:1px solid #aaa"></div>
<div class="abs" style="left:1155px;top:27px;width:211px;height:24px;background:#ececec;border-bottom:1px solid #c9c9c9"></div>
<div class="abs" style="left:1165px;top:30px;width:40px;height:21px;background:#fff;border:1px solid #b4b4b4;border-bottom:none"></div>
<div class="abs" style="left:1170.400px;top:33px;font-size:11px;line-height:16px;color:#222">Styles</div>
<div class="abs" style="left:1210.600px;top:33px;font-size:12px;letter-spacing:.1px;line-height:16px;color:#222">Computed</div>
<div class="abs" style="left:1278.500px;top:31px;font-size:12px;line-height:16px;color:#777">»</div>
<div class="abs" style="left:1351px;top:52px;width:15px;height:202px;background:#f1f1f1;border-left:1px solid #e6e6e6"></div>
<div class="abs" style="left:1354px;top:77px;width:10px;height:63px;background:#d0d0d0;border:1px solid #b9b9b9;border-radius:2px"></div>
<div class="sl" style="left:1230.2px;top:52.5px;"><span style="color:#555;text-decoration:underline">colorpicker.css:1</span></div>
<div class="sl" style="left:1159.8px;top:66.5px;">.colorpicker {</div>
<div class="sl" style="left:1177.5px;top:82.0px;"><span class="p">width</span>: 356px;</div>
<div class="sl" style="left:1177.5px;top:96.0px;"><span class="p">height</span>: 176px;</div>
<div class="sl" style="left:1177.5px;top:110.0px;"><span class="p">overflow</span>:<svg style="display:inline-block;vertical-align:-1px;margin:0 1px" width="7" height="9" viewBox="0 0 7 9"><path d="M.300 .5v8L6.700 4.500z" fill="#6e6e6e"/></svg>hidden;</div>
<div class="sl" style="left:1177.5px;top:124.0px;"><span class="p">position</span>: absolute;</div>
<div class="sl" style="left:1177.5px;top:138.3px;"><span class="p">background</span>:<svg style="display:inline-block;vertical-align:-1px;margin:0 1px" width="7" height="9" viewBox="0 0 7 9"><path d="M.300 .5v8L6.700 4.500z" fill="#6e6e6e"/></svg></div>
<div class="sl" style="left:1197.2px;top:152.4px;">url(<span style="color:#1a1aa6;text-decoration:underline">/umbraco/images/</span>…</div>
<div class="sl" style="left:1177.5px;top:166.3px;"><span class="p">font-family</span>: Arial,</div>
<div class="sl" style="left:1197.2px;top:180.4px;">Helvetica, sans-</div>
<div class="sl" style="left:1197.2px;top:194.3px;">serif;</div>
<div class="sl" style="left:1177.5px;top:208.3px;"><span style="text-decoration:line-through;color:#222"><span class="p">display</span>: none;</span></div>
<div class="abs" style="left:1161px;top:220px;width:126px;height:22px;background:#ffff33"></div>
<div class="sl" style="left:1177.5px;top:222.2px;"><span class="p">z-index</span>: 1000;</div>
<div class="sl" style="left:1159.8px;top:236.3px;">}</div>
<div class="abs" style="left:1155px;top:254px;width:196px;height:1px;background:#c4c4c4"></div>
<div class="sl" style="left:1159.8px;top:257.0px;"><span style="color:#555;text-decoration:underline">DependencyHandl…b2RhbC9zdHl</span></div>
<div class="abs" style="left:0;top:257px;width:1154px;height:18px;background:#e8e8e8;border-top:1px solid #d2d2d2"></div>
<div class="abs" style="left:582px;top:257px;width:179px;height:18px;background:#3879d9"></div>
<div class="bc" style="letter-spacing:0.02px;left:7.3px;top:257px">html</div>
<div class="bc" style="letter-spacing:-0.03px;left:44.5px;top:257px">body#umbracoMainPageBody</div>
<div class="bc" style="letter-spacing:-0.16px;left:213.8px;top:257px">div#uiArea</div>
<div class="bc" style="letter-spacing:0.08px;left:282.9px;top:257px">div#rightDIV</div>
<div class="bc" style="letter-spacing:0.22px;left:360.9px;top:257px">iframe#right</div>
<div class="bc" style="letter-spacing:-0.00px;left:439.3px;top:257px">html</div>
<div class="bc" style="letter-spacing:-0.09px;left:476.4px;top:257px">body.umbracoPage</div>
<div class="bc" style="letter-spacing:-0.22px;left:589.800px;top:257px;color:#fff;font-weight:bold;font-size:11px">div#collorpicker_912.colorpicker</div>
</div>

</body>
</html>
